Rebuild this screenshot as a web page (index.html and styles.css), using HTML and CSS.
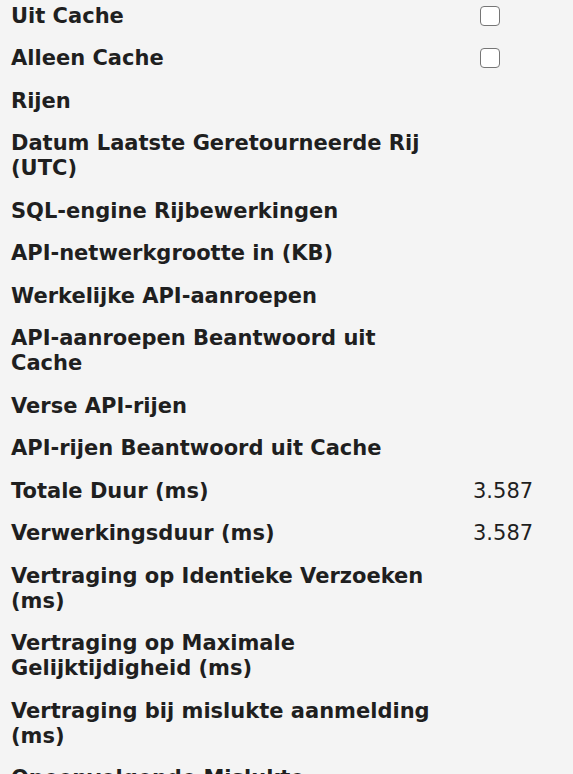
FILE: index.html
```html
<!DOCTYPE html>
<html>
<head>
<meta charset="utf-8">
<link rel="stylesheet" href="styles.css">
</head>
<body>
<div class="props">
  <div class="row"><div class="label">Uit Cache</div><div class="value"><span class="check"></span></div></div>
  <div class="row"><div class="label">Alleen Cache</div><div class="value"><span class="check"></span></div></div>
  <div class="row"><div class="label">Rijen</div><div class="value"></div></div>
  <div class="row"><div class="label">Datum Laatste Geretourneerde Rij (UTC)</div><div class="value"></div></div>
  <div class="row"><div class="label">SQL-engine Rijbewerkingen</div><div class="value"></div></div>
  <div class="row"><div class="label">API-netwerkgrootte in (KB)</div><div class="value"></div></div>
  <div class="row"><div class="label">Werkelijke API-aanroepen</div><div class="value"></div></div>
  <div class="row"><div class="label">API-aanroepen Beantwoord uit Cache</div><div class="value"></div></div>
  <div class="row"><div class="label">Verse API-rijen</div><div class="value"></div></div>
  <div class="row"><div class="label">API-rijen Beantwoord uit Cache</div><div class="value"></div></div>
  <div class="row"><div class="label">Totale Duur (ms)</div><div class="value">3.587</div></div>
  <div class="row"><div class="label">Verwerkingsduur (ms)</div><div class="value">3.587</div></div>
  <div class="row"><div class="label">Vertraging op Identieke Verzoeken (ms)</div><div class="value"></div></div>
  <div class="row"><div class="label">Vertraging op Maximale Gelijktijdigheid (ms)</div><div class="value"></div></div>
  <div class="row"><div class="label">Vertraging bij mislukte aanmelding (ms)</div><div class="value"></div></div>
  <div class="row"><div class="label">Opeenvolgende Mislukte Aanmeldingen</div><div class="value"></div></div>
</div>
</body>
</html>
```
FILE: styles.css
```css
html, body {
  margin: 0;
  padding: 0;
  background: #f4f4f4;
}
body {
  font-family: "DejaVu Sans", Verdana, sans-serif;
  color: #1f1f1f;
  font-size: 21px;
  line-height: 25px;
}
.props {
  margin-top: -5px;
  padding-left: 11px;
}
.row {
  display: grid;
  grid-template-columns: 432px 1fr;
  column-gap: 30px;
  padding: 8.75px 0;
}
.label {
  font-weight: bold;
}
.value {
  font-weight: normal;
}
.check {
  display: inline-block;
  width: 20px;
  height: 20px;
  box-sizing: border-box;
  border: 1.5px solid #767676;
  border-radius: 4px;
  background: #ffffff;
  margin-left: 7px;
  margin-top: 2px;
  vertical-align: top;
}
```
